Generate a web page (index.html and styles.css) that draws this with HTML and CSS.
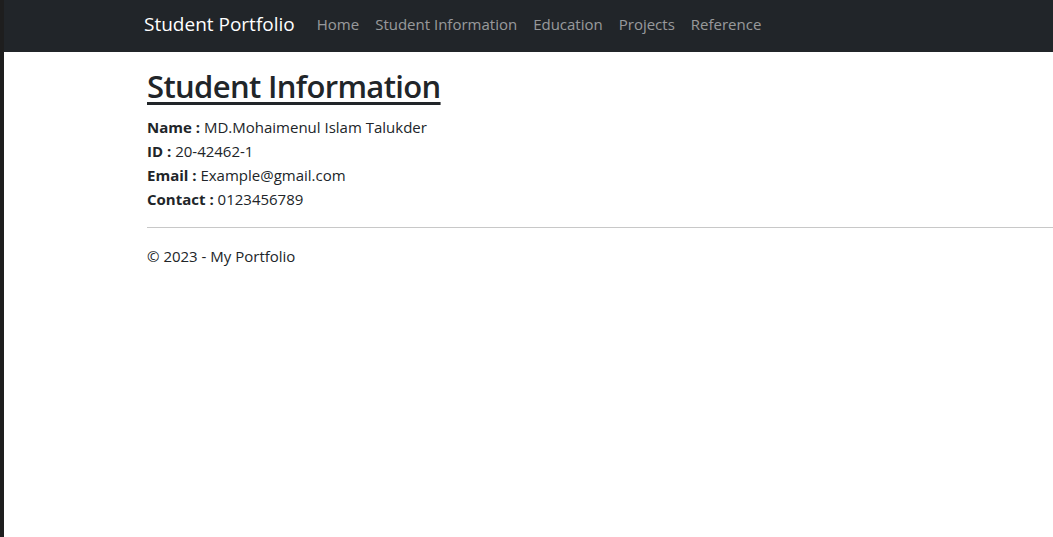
FILE: index.html
```html
<!DOCTYPE html>
<html lang="en">
<head>
<meta charset="utf-8">
<title>Student Portfolio</title>
<link rel="stylesheet" href="styles.css">
</head>
<body>
<div class="frame">
  <nav class="navbar">
    <a class="brand" href="#">Student Portfolio</a>
    <ul class="nav">
      <li><a href="#">Home</a></li>
      <li><a href="#">Student Information</a></li>
      <li><a href="#">Education</a></li>
      <li><a href="#">Projects</a></li>
      <li><a href="#">Reference</a></li>
    </ul>
  </nav>
  <main class="content">
    <h2 class="title">Student Information</h2>
    <p class="row"><b>Name :</b> MD.Mohaimenul Islam Talukder</p>
    <p class="row"><b>ID :</b> 20-42462-1</p>
    <p class="row"><b>Email :</b> Example@gmail.com</p>
    <p class="row"><b>Contact :</b> 0123456789</p>
    <hr class="rule">
    <footer class="footer">&copy; 2023 - My Portfolio</footer>
  </main>
</div>
</body>
</html>
```

FILE: styles.css
```css
html, body {
  margin: 0;
  padding: 0;
  height: 100%;
}
body {
  font-family: "Open Sans", "Noto Sans", sans-serif;
  color: #212529;
  background: #fff;
  overflow: hidden;
}
.frame {
  min-height: 100%;
  border-left: 4px solid #1e1e1e;
  box-sizing: border-box;
}
.navbar {
  height: 52px;
  box-sizing: border-box;
  padding-bottom: 4px;
  background: #212529;
  display: flex;
  align-items: center;
  padding-left: 140px;
}
.brand {
  color: #fff;
  text-decoration: none;
  font-size: 19px;
  margin-right: 14px;
}
.nav {
  display: flex;
  list-style: none;
  margin: 0;
  padding: 0;
}
.nav a {
  display: block;
  padding: 0 8px;
  color: rgba(255,255,255,0.55);
  text-decoration: none;
  font-size: 15px;
}
.content {
  padding-left: 143px;
  padding-top: 16px;
}
.title {
  margin: 0 0 10px;
  font-size: 31px;
  letter-spacing: -0.65px;
  font-weight: 600;
  line-height: 1.2;
  text-decoration: underline;
  text-decoration-thickness: 3px;
  text-underline-offset: 4px;
  display: inline-block;
}
.row {
  margin: 0;
  font-size: 15px;
  line-height: 24px;
}
.row b {
  font-weight: 700;
}
.rule {
  margin: 16px 0;
  border: 0;
  border-top: 1px solid #c8c8c8;
}
.footer {
  font-size: 15px;
  line-height: 24px;
}
```
